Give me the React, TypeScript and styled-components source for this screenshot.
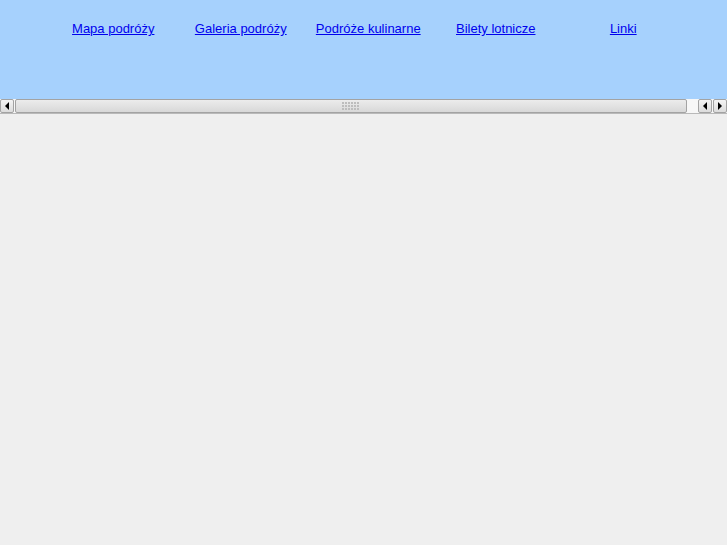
import React from "react";
import styled, { createGlobalStyle } from "styled-components";

const Global = createGlobalStyle`
  html, body { margin: 0; padding: 0; background: #efefef; }
  body { font-family: "Liberation Sans", Arial, sans-serif; }
`;

const Page = styled.div`
  width: 727px;
  height: 545px;
  display: flex;
  flex-direction: column;
  background: #efefef;
  overflow: hidden;
`;

const Header = styled.div`
  height: 99px;
  background: #a6d1fd;
  box-sizing: border-box;
  padding: 21px 0 0 49.5px;
`;

const Nav = styled.nav`
  display: flex;
`;

const NavCell = styled.div`
  width: 127.5px;
  text-align: center;
  font-size: 13px;
  line-height: 16px;
`;

const NavLink = styled.a`
  color: #0000ee;
  text-decoration: underline;
`;

const ScrollBar = styled.div`
  height: 14px;
  display: flex;
  background: #f7f7f7;
  border-bottom: 1px solid #b9b9b9;
  box-sizing: content-box;
`;

const ArrowBtn = styled.div<{ gap?: number }>`
  width: 14px;
  height: 14px;
  border: 1px solid #a3a3a3;
  border-radius: 2px;
  margin-right: ${(p) => p.gap ?? 0}px;
  background: linear-gradient(#f4f4f4, #dcdcdc);
  display: flex;
  align-items: center;
  justify-content: center;
  box-sizing: border-box;
`;

const Thumb = styled.div`
  width: 672px;
  height: 14px;
  box-sizing: border-box;
  border: 1px solid #a3a3a3;
  border-radius: 2px;
  background: linear-gradient(#ececec, #d8d8d8);
  display: flex;
  align-items: center;
  justify-content: center;
`;

const Track = styled.div`
  flex: 1;
  background: #f7f7f7;
`;

const Grip = () => (
  <svg width="18" height="8" viewBox="0 0 18 8">
    {[0, 3, 6].map((y) =>
      [0, 3, 6, 9, 12, 15].map((x) => (
        <rect key={`${x}-${y}`} x={x} y={y} width="2" height="2" fill="#bdbdbd" />
      ))
    )}
  </svg>
);

const Arrow = ({ dir }: { dir: "left" | "right" }) => (
  <svg width="6" height="8" viewBox="0 0 6 8">
    {dir === "left" ? (
      <polygon points="5,0 5,8 1,4" fill="#000" />
    ) : (
      <polygon points="1,0 1,8 5,4" fill="#000" />
    )}
  </svg>
);

const items = ["Mapa podróży", "Galeria podróży", "Podróże kulinarne", "Bilety lotnicze", "Linki"];

export default function App() {
  return (
    <>
      <Global />
      <Page>
        <Header>
          <Nav>
            {items.map((t) => (
              <NavCell key={t}>
                <NavLink href="#">{t}</NavLink>
              </NavCell>
            ))}
          </Nav>
        </Header>
        <ScrollBar>
          <ArrowBtn gap={1}>
            <Arrow dir="left" />
          </ArrowBtn>
          <Thumb>
            <Grip />
          </Thumb>
          <Track />
          <ArrowBtn gap={1}>
            <Arrow dir="left" />
          </ArrowBtn>
          <ArrowBtn>
            <Arrow dir="right" />
          </ArrowBtn>
        </ScrollBar>
      </Page>
    </>
  );
}
